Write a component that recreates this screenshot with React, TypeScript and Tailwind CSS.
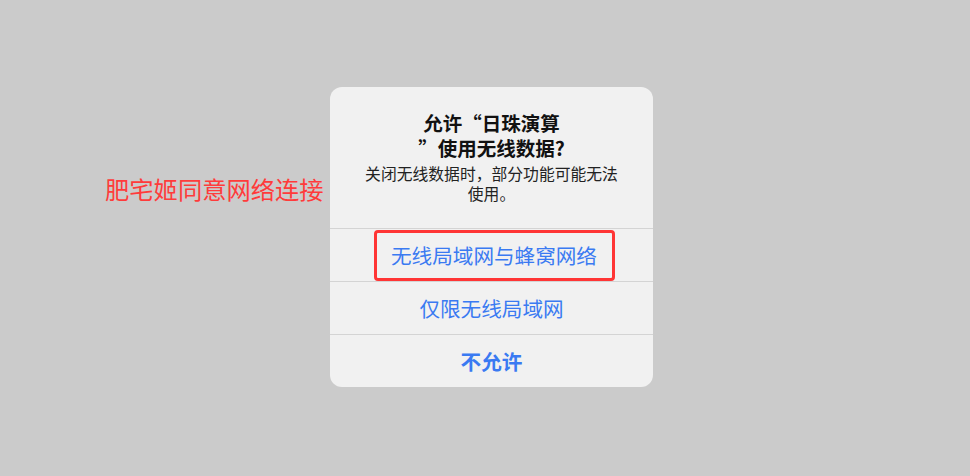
import React from "react";

export default function App() {
  const font = { fontFamily: '"Noto Sans CJK SC", "Noto Sans", sans-serif' };
  return (
    <div
      className="w-[970px] h-[476px] bg-[#cbcbcb] flex items-start pt-[87px] pl-[105px]"
      style={font}
    >
      <div className="mt-[87px] w-[225px] text-[24.3px] leading-[30px] text-[#ff3b3b] whitespace-nowrap">
        肥宅姬同意网络连接
      </div>
      <div className="w-[323px] rounded-[12px] bg-[#f1f1f1] flex flex-col overflow-hidden">
        <div className="pt-[23px] pb-[24px] px-[8px] flex flex-col items-center text-center">
          <div className="text-[19.5px] leading-[25px] font-bold text-[#111]">
            允许“日珠演算
            <br />
            ”使用无线数据?
          </div>
          <div className="mt-[4px] text-[15.8px] leading-[20px] text-[#222] whitespace-nowrap">
            关闭无线数据时，部分功能可能无法
            <br />
            使用。
          </div>
        </div>
        <div className="border-t border-[#d4d4d4] h-[53px] flex items-center justify-center">
          <div className="ml-[5px] w-[241px] h-[51px] border-[3px] border-[#ff3535] rounded-[4px] flex items-center justify-center text-[20.6px] text-[#3a7af2]">
            无线局域网与蜂窝网络
          </div>
        </div>
        <div className="border-t border-[#d4d4d4] h-[53px] flex items-center justify-center text-[20.6px] text-[#3a7af2]">
          仅限无线局域网
        </div>
        <div className="border-t border-[#d4d4d4] h-[53px] flex items-center justify-center text-[20.6px] font-bold text-[#3a7af2]">
          不允许
        </div>
      </div>
    </div>
  );
}
